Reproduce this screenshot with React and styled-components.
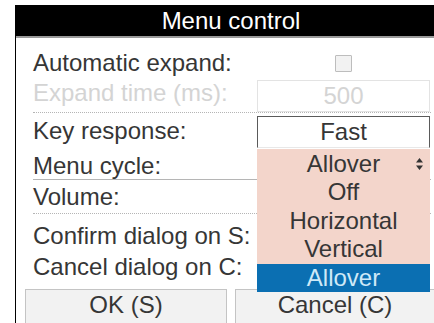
import React from 'react';
import styled, { createGlobalStyle } from 'styled-components';

const GlobalStyle = createGlobalStyle`
  html, body {
    margin: 0;
    padding: 0;
    background: #ffffff;
    overflow: hidden;
  }
  body {
    font-family: "Liberation Sans", Arial, sans-serif;
  }
`;

const Page = styled.div`
  width: 434px;
  height: 323px;
  padding: 5px 0 0 15px;
  box-sizing: border-box;
  overflow: hidden;
`;

const Panel = styled.div`
  position: relative;
  width: 440px;
  height: 330px;
  border-left: 1px solid #000;
  box-sizing: border-box;
`;

const Header = styled.div`
  height: 31px;
  background: #000;
  color: #fff;
  font-size: 24px;
  line-height: 31px;
  text-align: center;
  padding-right: 9px;
  border-bottom: 2px solid #9a9a9a;
`;

const Body = styled.div`
  padding: 8px 0 0 17px;
  width: 398px;
`;

const Row = styled.div`
  display: grid;
  grid-template-columns: 224px 173px;
  align-items: center;
  height: ${p => p.$h}px;
  border-bottom: ${p => (p.$line ? `1px ${p.$line} #b5b5b5` : 'none')};
  color: ${p => (p.$disabled ? '#d4d4d4' : '#363636')};
  font-size: 24px;
`;

const Label = styled.div`
  white-space: nowrap;
  margin-top: ${p => p.$shift || 0}px;
`;

const Cell = styled.div`
  display: flex;
  justify-content: center;
  align-items: center;
`;

const Checkbox = styled.div`
  width: 15px;
  height: 15px;
  border: 1px solid #bdbdbd;
  background: #f2f2f2;
  border-radius: 1px;
`;

const Field = styled.div`
  position: relative;
  width: 100%;
  height: ${p => p.$h}px;
  box-sizing: border-box;
  display: flex;
  align-items: center;
  justify-content: center;
  background: ${p => p.$bg};
  border: 1px solid ${p => p.$border};
  border-bottom-color: ${p => p.$under || p.$border};
  color: ${p => p.$color || '#363636'};
`;

const Arrows = styled.svg`
  position: absolute;
  right: 6px;
  top: 50%;
  transform: translateY(-50%);
`;

const List = styled.div`
  position: absolute;
  left: 241px;
  top: 173px;
  width: 173px;
  background: #f3d5cb;
  font-size: 24px;
  color: #363636;
`;

const Item = styled.div`
  height: 28.5px;
  line-height: 28.5px;
  text-align: center;
  background: ${p => (p.$active ? '#0b6fb2' : 'transparent')};
  color: ${p => (p.$active ? '#cfe9f7' : '#363636')};
`;

const Buttons = styled.div`
  display: grid;
  grid-template-columns: 202px 200px;
  column-gap: 8px;
  padding: 7px 0 0 9px;
`;

const Button = styled.div`
  height: 36px;
  box-sizing: border-box;
  border: 1px solid #c4c4c4;
  background: #f2f2f2;
  color: #363636;
  font-size: 24px;
  display: flex;
  align-items: center;
  justify-content: center;
  padding-bottom: 4px;
`;

export default function App() {
  return (
    <Page>
      <GlobalStyle />
      <Panel>
        <Header>Menu control</Header>
        <Body>
          <Row $h={34}>
            <Label>Automatic expand:</Label>
            <Cell>
              <Checkbox />
            </Cell>
          </Row>
          <Row $h={32} $disabled $line="dotted">
            <Label $shift={-6}>Expand time (ms):</Label>
            <Field $h={32} $bg="#fff" $border="#e3e3e3" $color="#d4d4d4">500</Field>
          </Row>
          <Row $h={35}>
            <Label>Key response:</Label>
            <Cell style={{ alignSelf: 'end' }}>
              <Field $h={32} $bg="#fff" $border="#5a5a5a" $under="#e8e8e8">Fast</Field>
            </Cell>
          </Row>
          <Row $h={31} $line="solid">
            <Label $shift={4}>Menu cycle:</Label>
            <Field $h={31} $bg="#f3d5cb" $border="#f3d5cb" $under="#4a5560">
              Allover
              <Arrows width="7" height="12" viewBox="0 0 7 12">
                <path d="M3.5 0 L7 4.5 L0 4.5 Z M3.5 12 L7 7.5 L0 7.5 Z" fill="#333" />
              </Arrows>
            </Field>
          </Row>
          <Row $h={33} $line="dotted">
            <Label>Volume:</Label>
            <Cell />
          </Row>
          <Row $h={38}>
            <Label $shift={6}>Confirm dialog on S:</Label>
            <Cell />
          </Row>
          <Row $h={30}>
            <Label>Cancel dialog on C:</Label>
            <Cell />
          </Row>
        </Body>
        <List>
          <Item>Off</Item>
          <Item>Horizontal</Item>
          <Item>Vertical</Item>
          <Item $active>Allover</Item>
        </List>
        <Buttons>
          <Button>OK (S)</Button>
          <Button>Cancel (C)</Button>
        </Buttons>
      </Panel>
    </Page>
  );
}
